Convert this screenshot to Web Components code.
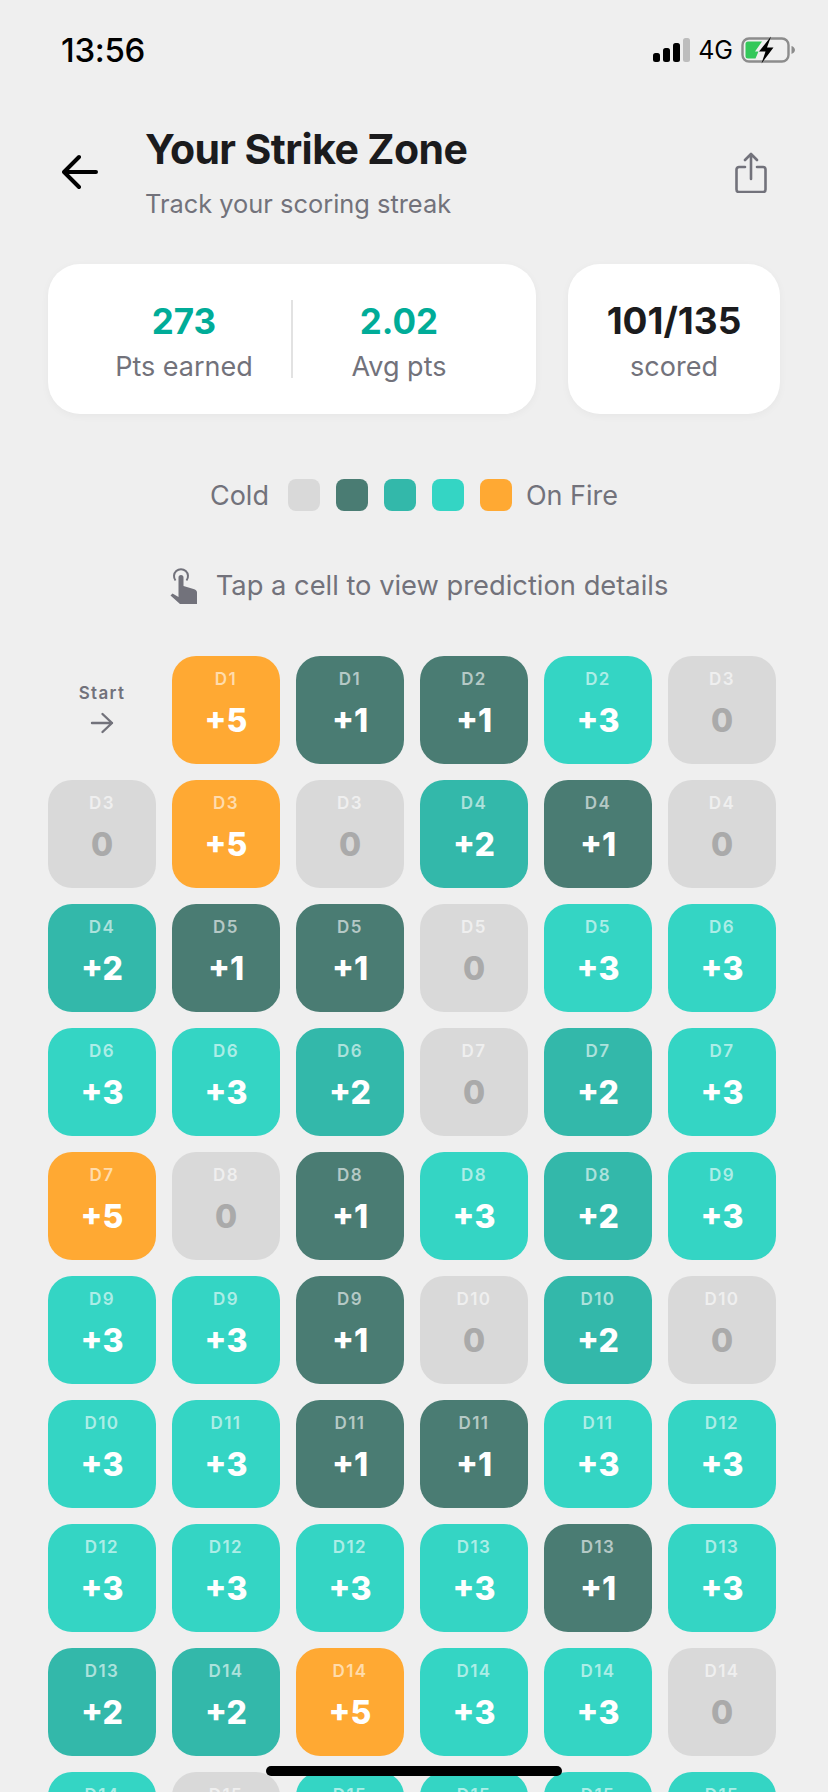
<!DOCTYPE html>
<html>
<head>
<meta charset="utf-8">
<title>Your Strike Zone</title>
<style>
  html, body { margin: 0; height: 100%; overflow: hidden; background: #efefef; }
  body { font-family: "Inter", sans-serif; }
</style>
</head>
<body>
<strike-page>
  <status-bar time="13:56"></status-bar>
  <page-header heading="Your Strike Zone" sub="Track your scoring streak"></page-header>
  <stat-cards></stat-cards>
  <heat-legend></heat-legend>
  <tap-hint>Tap a cell to view prediction details</tap-hint>
  <strike-grid></strike-grid>
</strike-page>
<home-indicator></home-indicator>

<script>
class StrikePage extends HTMLElement {
    constructor() {
        super();
        this.attachShadow({ mode: 'open' }).innerHTML = `
        <style>
            :host { display: block; height: 1792px; overflow: hidden; }
        </style>
        <slot></slot>`;
    }
}

class StatusBar extends HTMLElement {
    constructor() {
        super();
        this.attachShadow({ mode: 'open' }).innerHTML = `
        <style>
            :host {
                display: flex;
                justify-content: space-between;
                align-items: center;
                height: 48px;
                padding: 26px 33px 0 61px;
                color: #000;
            }
            .time { font-size: 33px; font-weight: 500; letter-spacing: -0.3px; }
            .right { display: flex; align-items: center; }
            .net { font-size: 25px; font-weight: 400; margin: 0 8px 0 8px; }
            svg { display: block; }
        </style>
        <span class="time"></span>
        <div class="right">
            <svg width="37" height="24" viewBox="0 0 37 24">
                <rect x="0" y="15" width="7" height="9" rx="2.500" fill="#000"/>
                <rect x="10" y="10" width="7" height="14" rx="2.500" fill="#000"/>
                <rect x="20" y="5" width="7" height="19" rx="2.500" fill="#000"/>
                <rect x="30" y="0" width="7" height="24" rx="2.500" fill="#bdbdbd"/>
            </svg>
            <span class="net">4G</span>
            <svg width="54" height="28" viewBox="0 0 54 28">
                <rect x="1.500" y="2.500" width="46" height="23" rx="6.500" fill="none" stroke="#8c8c8c" stroke-width="2.400"/>
                <path d="M50.500 10v8c1.800-.6 3.500-2.200 3.500-4s-1.700-3.400-3.500-4z" fill="#8c8c8c"/>
                <path d="M7 5.500h14l-7 10h3.500l-3 7H7a2.500 2.500 0 0 1-2.500-2.500V8A2.500 2.500 0 0 1 7 5.500z" fill="#34c85a"/>
                <path d="M30 0.500 18 15.500h6.500L20.500 27.500 32.500 11.500h-6.500z" fill="#000"/>
            </svg>
        </div>`;
        this.shadowRoot.querySelector('.time').textContent = this.getAttribute('time');
    }
}

class PageHeader extends HTMLElement {
    constructor() {
        super();
        this.attachShadow({ mode: 'open' }).innerHTML = `
        <style>
            :host {
                display: flex;
                align-items: flex-start;
                padding: 47px 61px 0 62px;
                height: 115px;
            }
            .back { width: 36px; height: 50px; margin-top: 28px; flex: none; }
            .titles { flex: 1; margin-left: 47px; }
            h1 {
                margin: 0;
                font-size: 41px;
                line-height: 56px;
                font-weight: 700;
                letter-spacing: -0.6px;
                color: #1b1b1d;
            }
            p {
                margin: 9px 0 0;
                font-size: 25.4px;
                line-height: 36px;
                color: #72727b;
            }
            .share { width: 32px; height: 41px; margin-top: 31px; flex: none; }
            svg { display: block; }
        </style>
        <svg class="back" viewBox="0 0 36 50">
            <path d="M34 23H3M17 8 2 23l15 15" fill="none" stroke="#000" stroke-width="4" stroke-linecap="round" stroke-linejoin="round"/>
        </svg>
        <div class="titles"><h1></h1><p></p></div>
        <svg class="share" viewBox="0 0 32 41">
            <path d="M10 15H4a2.500 2.500 0 0 0-2.500 2.500v20A2.500 2.500 0 0 0 4 40h24a2.500 2.500 0 0 0 2.500-2.500v-20A2.500 2.500 0 0 0 28 15h-6M16 27V2M10 8l6-6 6 6" fill="none" stroke="#72727b" stroke-width="2.600" stroke-linecap="round" stroke-linejoin="round"/>
        </svg>`;
        this.shadowRoot.querySelector('h1').textContent = this.getAttribute('heading');
        this.shadowRoot.querySelector('p').textContent = this.getAttribute('sub');
    }
}

class StatCards extends HTMLElement {
    constructor() {
        super();
        this.attachShadow({ mode: 'open' }).innerHTML = `
        <style>
            :host {
                display: flex;
                gap: 32px;
                margin-top: 28px;
                padding: 0 48px;
            }
            .card {
                height: 150px;
                box-sizing: border-box;
                background: #fff;
                border-radius: 32px;
                box-shadow: 0 2px 8px rgba(0, 0, 0, 0.04);
                display: flex;
                align-items: center;
            }
            .main { width: 488px; padding-left: 32px; box-sizing: border-box; }
            .side { width: 212px; justify-content: center; }
            .stat { text-align: center; padding-top: 6px; }
            .pts { width: 208px; margin-right: 3px; }
            .avg { width: 212px; }
            .divider { width: 2px; height: 78px; background: #e2e2e2; }
            .num { font-size: 35px; line-height: 44px; font-weight: 700; color: #00ac98; }
            .side .num { font-size: 37px; color: #1b1b1d; }
            .lbl { font-size: 27px; line-height: 36px; margin-top: 6px; color: #72727b; }
        </style>
        <div class="card main">
            <div class="stat pts"><div class="num">273</div><div class="lbl">Pts earned</div></div>
            <div class="divider"></div>
            <div class="stat avg"><div class="num">2.02</div><div class="lbl">Avg pts</div></div>
        </div>
        <div class="card side">
            <div class="stat"><div class="num">101/135</div><div class="lbl">scored</div></div>
        </div>`;
    }
}

class HeatLegend extends HTMLElement {
    constructor() {
        super();
        this.attachShadow({ mode: 'open' }).innerHTML = `
        <style>
            :host {
                display: flex;
                justify-content: center;
                align-items: center;
                gap: 16px;
                margin-top: 65px;
                height: 32px;
                font-size: 27px;
                color: #72727b;
            }
            span { display: block; width: 32px; height: 32px; border-radius: 8px; }
            em { font-style: normal; }
            em:first-of-type { margin-right: 3px; }
            em:last-of-type { margin-left: -2px; }
        </style>
        <em>Cold</em>
        <span style="background:#d9d9d9"></span>
        <span style="background:#4a7c73"></span>
        <span style="background:#33b8aa"></span>
        <span style="background:#34d5c4"></span>
        <span style="background:#ffa933"></span>
        <em>On Fire</em>`;
    }
}

class TapHint extends HTMLElement {
    constructor() {
        super();
        this.attachShadow({ mode: 'open' }).innerHTML = `
        <style>
            :host {
                display: flex;
                justify-content: center;
                align-items: center;
                gap: 19px;
                margin-top: 54px;
                height: 40px;
                font-size: 27.3px;
                color: #72727b;
                padding-left: 10px;
            }
            svg { display: block; flex: none; margin-top: 2px; }
        </style>
        <svg width="27" height="36" viewBox="0 0 27 36">
            <path d="M5.500 12.500a7 7 0 1 1 11 0" fill="none" stroke="#72727b" stroke-width="2"/>
            <path d="M8.500 9.500a2.500 2.500 0 0 1 5 0V18l10 3c2 .6 3.500 1.600 3.500 3.500V36H10L.5 27.500l2-2 6 3.500z" fill="#72727b"/>
        </svg>
        <span><slot></slot></span>`;
    }
}

class StrikeCell extends HTMLElement {
    constructor() {
        super();
        const pts = this.getAttribute('pts');
        this.attachShadow({ mode: 'open' }).innerHTML = `
        <style>
            :host {
                display: flex;
                flex-direction: column;
                align-items: center;
                width: 108px;
                height: 108px;
                border-radius: 24px;
                color: #fff;
            }
            :host([pts="0"]) { background: #d9d9d9; color: #aaa; }
            :host([pts="1"]) { background: #4a7c73; }
            :host([pts="2"]) { background: #33b8aa; }
            :host([pts="3"]) { background: #34d5c4; }
            :host([pts="5"]) { background: #ffa933; }
            .day {
                margin-top: 13px;
                font-size: 17px;
                line-height: 20px;
                font-weight: 600;
                letter-spacing: 1.4px;
                color: rgba(255, 255, 255, 0.6);
            }
            .val {
                margin-top: 11px;
                font-size: 32px;
                line-height: 42px;
                font-weight: 800;
            }
        </style>
        <div class="day"></div>
        <div class="val"></div>`;
        this.shadowRoot.querySelector('.day').textContent = this.getAttribute('day');
        this.shadowRoot.querySelector('.val').textContent = pts === '0' ? '0' : '+' + pts;
    }
}

class StartCell extends HTMLElement {
    constructor() {
        super();
        this.attachShadow({ mode: 'open' }).innerHTML = `
        <style>
            :host {
                display: flex;
                flex-direction: column;
                align-items: center;
                width: 108px;
                height: 108px;
                color: #72727b;
            }
            div {
                margin-top: 27px;
                font-size: 17px;
                line-height: 20px;
                font-weight: 600;
                letter-spacing: 1.3px;
            }
            svg { display: block; margin-top: 9px; }
        </style>
        <div>Start</div>
        <svg width="24" height="22" viewBox="0 0 24 22">
            <path d="M2 11h20M12.500 2 22 11l-9.500 9" fill="none" stroke="#72727b" stroke-width="2.400" stroke-linecap="round" stroke-linejoin="round"/>
        </svg>`;
    }
}

const CELLS = [
    [1,5],[1,1],[2,1],[2,3],[3,0],
    [3,0],[3,5],[3,0],[4,2],[4,1],[4,0],
    [4,2],[5,1],[5,1],[5,0],[5,3],[6,3],
    [6,3],[6,3],[6,2],[7,0],[7,2],[7,3],
    [7,5],[8,0],[8,1],[8,3],[8,2],[9,3],
    [9,3],[9,3],[9,1],[10,0],[10,2],[10,0],
    [10,3],[11,3],[11,1],[11,1],[11,3],[12,3],
    [12,3],[12,3],[12,3],[13,3],[13,1],[13,3],
    [13,2],[14,2],[14,5],[14,3],[14,3],[14,0],
    [14,3],[15,0],[15,3],[15,3],[15,3],[15,3]
];

class StrikeGrid extends HTMLElement {
    constructor() {
        super();
        const cells = CELLS.map(c => `<strike-cell day="D${c[0]}" pts="${c[1]}"></strike-cell>`).join('');
        this.attachShadow({ mode: 'open' }).innerHTML = `
        <style>
            :host {
                display: grid;
                grid-template-columns: repeat(6, 108px);
                gap: 16px;
                margin-top: 51px;
                padding: 0 48px;
            }
        </style>
        <start-cell></start-cell>
        ${cells}`;
    }
}

class HomeIndicator extends HTMLElement {
    constructor() {
        super();
        this.attachShadow({ mode: 'open' }).innerHTML = `
        <style>
            :host {
                position: fixed;
                left: 266px;
                top: 1766px;
                width: 296px;
                height: 10px;
                border-radius: 5px;
                background: #000;
            }
        </style>`;
    }
}

customElements.define('strike-page', StrikePage);
customElements.define('status-bar', StatusBar);
customElements.define('page-header', PageHeader);
customElements.define('stat-cards', StatCards);
customElements.define('heat-legend', HeatLegend);
customElements.define('tap-hint', TapHint);
customElements.define('strike-cell', StrikeCell);
customElements.define('start-cell', StartCell);
customElements.define('strike-grid', StrikeGrid);
customElements.define('home-indicator', HomeIndicator);
</script>
</body>
</html>
